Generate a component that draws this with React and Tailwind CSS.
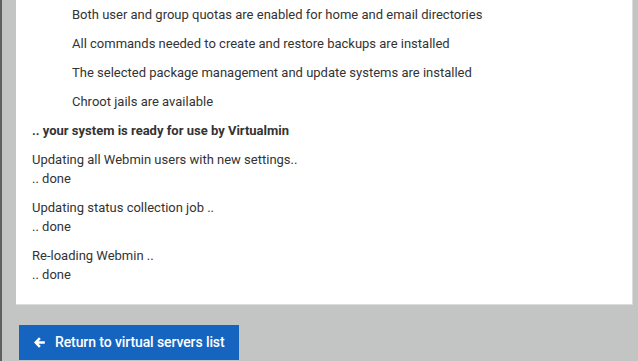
export default function App() {
  const checks = [
    'Both user and group quotas are enabled for home and email directories',
    'All commands needed to create and restore backups are installed',
    'The selected package management and update systems are installed',
    'Chroot jails are available',
  ]
  const steps = [
    'Updating all Webmin users with new settings..',
    'Updating status collection job ..',
    'Re-loading Webmin ..',
  ]

  return (
    <div className="h-[361px] w-[638px] overflow-hidden bg-[#c3c4c4] border-l-2 border-[#5f5f5f] font-['Roboto',sans-serif] text-[13px] text-[#333]">
      <div className="ml-[14px] mr-[5px] border-r border-b border-[#dcdcdc] bg-white pl-[16px] pt-[5px] pb-[10px] leading-[19px]">
        {checks.map((c) => (
          <div key={c} className="mb-[10px] pl-[40px]">{c}</div>
        ))}
        <div className="mb-[10px] font-bold">.. your system is ready for use by Virtualmin</div>
        {steps.map((s) => (
          <div key={s} className="mb-[10px]">
            <div>{s}</div>
            <div>.. done</div>
          </div>
        ))}
      </div>
      <button className="ml-[17px] mt-[20px] flex h-[35px] items-center gap-[10px] bg-[#1565c0] pl-[15px] pr-[14px] text-[14px] font-medium tracking-[-0.1px] text-white">
        <svg width="11" height="11" viewBox="0 0 11 11" fill="white">
          <path d="M5 0.2 L6.8 2 L4.6 4.2 H10.8 V6.8 H4.6 L6.8 9 L5 10.8 L0 5.5 Z" />
        </svg>
        Return to virtual servers list
      </button>
    </div>
  )
}
